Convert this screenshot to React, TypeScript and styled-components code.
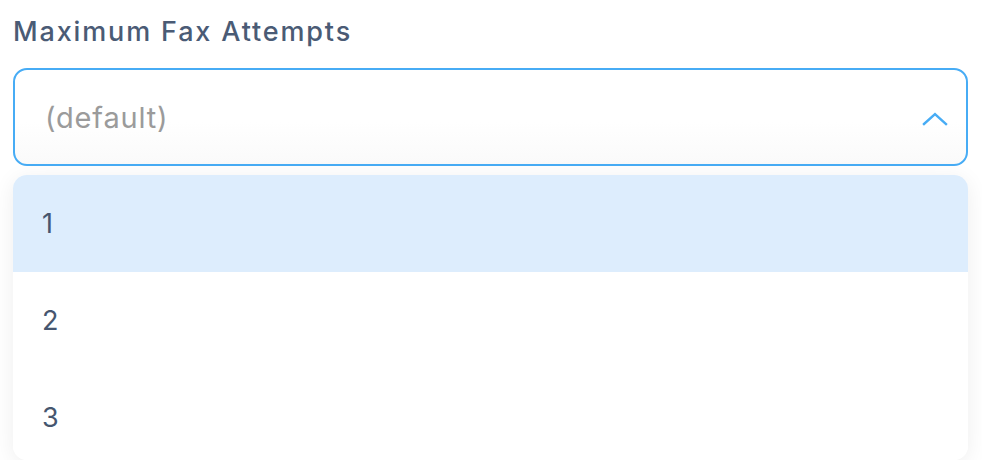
import React from "react";
import styled, { createGlobalStyle } from "styled-components";

const Global = createGlobalStyle`
  html, body { margin: 0; padding: 0; background: #ffffff; }
  body { font-family: "Inter", "Noto Sans", sans-serif; }
  * { box-sizing: border-box; }
`;

const Page = styled.div`
  width: 982px;
  height: 460px;
  overflow: hidden;
  padding: 15px 14px 0 13px;
  display: flex;
  flex-direction: column;
`;

const Label = styled.label`
  font-size: 27px;
  font-weight: 500;
  color: #4a5b75;
  line-height: 34px;
  letter-spacing: 1.85px;
  margin-bottom: 19px;
`;

const Field = styled.div`
  height: 98px;
  border: 2px solid #47acf5;
  border-radius: 14px;
  display: flex;
  align-items: center;
  justify-content: space-between;
  padding: 0 18px 0 30px;
  background: linear-gradient(#ffffff 55%, #fafafa);
`;

const Placeholder = styled.span`
  font-size: 29px;
  letter-spacing: 0.8px;
  color: #9b9b9b;
`;

const Chevron = styled.svg`
  width: 26px;
  height: 16px;
  margin-top: 4px;
`;

const Menu = styled.ul`
  list-style: none;
  margin: 9px 0 0;
  padding: 0;
  height: 285px;
  border-radius: 14px;
  overflow: hidden;
  background: #ffffff;
  box-shadow: 0 4px 22px rgba(0, 0, 0, 0.07);
`;

const Option = styled.li<{ $active?: boolean }>`
  height: 97px;
  display: flex;
  align-items: center;
  padding-left: 29px;
  font-size: 27px;
  color: #46566f;
  background: ${(p) => (p.$active ? "#ddedfd" : "#ffffff")};
`;

export default function App() {
  return (
    <>
      <Global />
      <Page>
        <Label>Maximum Fax Attempts</Label>
        <Field>
          <Placeholder>(default)</Placeholder>
          <Chevron viewBox="0 0 26 16" fill="none">
            <path d="M2 13 L13 3 L24 13" stroke="#47acf5" strokeWidth="2.4" strokeLinecap="square" />
          </Chevron>
        </Field>
        <Menu>
          <Option $active>1</Option>
          <Option>2</Option>
          <Option>3</Option>
        </Menu>
      </Page>
    </>
  );
}
